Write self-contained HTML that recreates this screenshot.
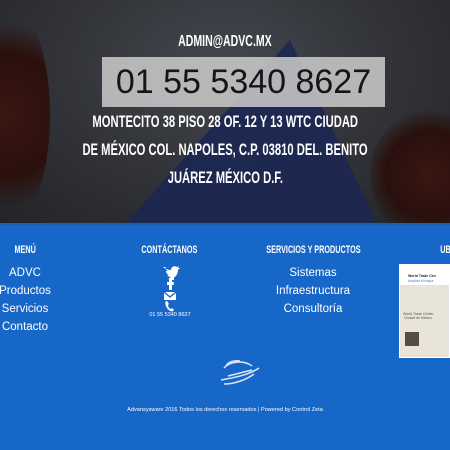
<!DOCTYPE html>
<html><head><meta charset="utf-8"><style>
*{margin:0;padding:0;box-sizing:border-box}
body{width:450px;height:450px;overflow:hidden;font-family:"Liberation Sans",sans-serif;position:relative;background:#1767c8}
.top{position:absolute;left:0;top:0;width:450px;height:223px;background:radial-gradient(ellipse at 50% 30%,#44474e 0%,#323439 50%,#222428 100%);overflow:hidden}
.bld{position:absolute;left:120px;top:40px;width:0;height:0;border-left:170px solid transparent;border-right:90px solid transparent;border-bottom:190px solid #1a2655;opacity:.85}
.tree{position:absolute;border-radius:50%;background:radial-gradient(circle,#3a1612 0%,#2a100d 50%,rgba(30,10,8,0) 75%)}
.cond{font-weight:bold;transform:scaleX(.66);display:inline-block;white-space:nowrap}
.c{position:absolute;left:0;width:450px;text-align:center;color:#fff}
.box{position:absolute;left:102px;top:57px;width:283px;height:50px;background:rgba(205,205,205,.85);text-align:center;font-size:34px;line-height:50px;color:#151515;font-family:"Liberation Sans",sans-serif}
.h{position:absolute;top:244px;color:#fff;font-size:11px;text-align:center;width:160px}
.l{position:absolute;color:#fff;font-size:11.5px;text-align:center;width:140px;line-height:18px}
</style></head><body>
<div class="top">
<div class="bld"></div>
<div class="tree" style="left:-40px;top:0;width:90px;height:230px"></div>
<div class="tree" style="left:370px;top:110px;width:120px;height:130px"></div>
<div class="c" style="top:33px;font-size:16px"><span class="cond">ADMIN@ADVC.MX</span></div>
<div class="box">01 55 5340 8627</div>
<div class="c" style="top:108px;font-size:17px;line-height:28px"><span class="cond">MONTECITO 38 PISO 28 OF. 12 Y 13 WTC CIUDAD</span><br><span class="cond">DE MÉXICO COL. NAPOLES, C.P. 03810 DEL. BENITO</span><br><span class="cond">JUÁREZ MÉXICO D.F.</span></div>
</div>
<div style="position:absolute;left:0;top:223px;width:450px;height:2px;background:#1a5fb0"></div>
<div class="h" style="left:-55px"><span class="cond">MENÚ</span></div>
<div class="h" style="left:89px"><span class="cond">CONTÁCTANOS</span></div>
<div class="h" style="left:233px"><span class="cond">SERVICIOS Y PRODUCTOS</span></div>
<div class="h" style="left:400px;width:60px;text-align:left;padding-left:37px"><span class="cond">UBI</span></div>
<div class="l" style="left:-45px;top:264px">ADVC<br>Productos<br>Servicios<br>Contacto</div>
<div class="l" style="left:243px;top:264px">Sistemas<br>Infraestructura<br>Consultoría</div>
<svg style="position:absolute;left:160px;top:263px" width="20" height="50" viewBox="0 0 20 50" fill="#fff">
<path d="M3 4c3 2 6 3 8 3 0-3 3-5 6-3l2-1-1 2 2 0-2 2c0 6-5 10-11 9 2 0 3-1 4-2-2 0-3-1-4-2h2c-2-1-3-2-3-4h2c-2-1-3-3-2-4z"/>
<path d="M9 27v-5h-2v-3h2v-2c0-2 1-3 3-3h2v3h-1c-1 0-1 0-1 1v1h2l-0.5 3h-1.5v5z"/>
<rect x="4" y="29" width="12" height="8"/><path d="M4 29l6 5 6-5" stroke="#1767c8" stroke-width="1.3" fill="none"/>
<path d="M6 38c-1 1-1 4 1 7s5 4 6 3l1-1-2-2-1 1c-1 0-3-2-3-4l1-1-2-3z"/>
</svg>
<div style="position:absolute;left:110px;top:312px;width:120px;text-align:center;color:#fff;font-size:5.5px">01 55 5340 8627</div>
<div style="position:absolute;left:399px;top:264px;width:51px;height:94px;background:#e9e4da;border:1px solid #fff">
<div style="position:absolute;left:0;top:0;width:51px;height:20px;background:#fff"></div>
<div style="position:absolute;left:8px;top:9px;font-size:3.5px;font-weight:bold;color:#222;white-space:nowrap">World Trade Cen</div>
<div style="position:absolute;left:8px;top:14px;font-size:3.5px;color:#3a78d6;white-space:nowrap">Ampliar el mapa</div>
<div style="position:absolute;left:3px;top:47px;font-size:3.5px;color:#555;white-space:nowrap">World Trade Center<br>&nbsp;Ciudad de México</div>
<div style="position:absolute;left:5px;top:67px;width:14px;height:14px;background:#554c44"></div>
</div>
<svg style="position:absolute;left:218px;top:358px" width="46" height="32" viewBox="0 0 46 32" fill="none" stroke="#dfe7f5" stroke-width="1.5">
<path d="M6 10c6-7 20-8 28-2"/><path d="M8 8c2-4 8-6 14-5"/><path d="M3 22c10-2 26-4 38-12"/><path d="M6 26c10 0 22-4 30-10"/><path d="M10 18c8-2 16-4 24-6"/>
</svg>
<div style="position:absolute;left:0;top:407px;width:450px;text-align:center;color:#fff;font-size:5.6px">Advansysware 2016 Todos los derechos reservados | Powered by Control Zeta</div>
</body></html>
